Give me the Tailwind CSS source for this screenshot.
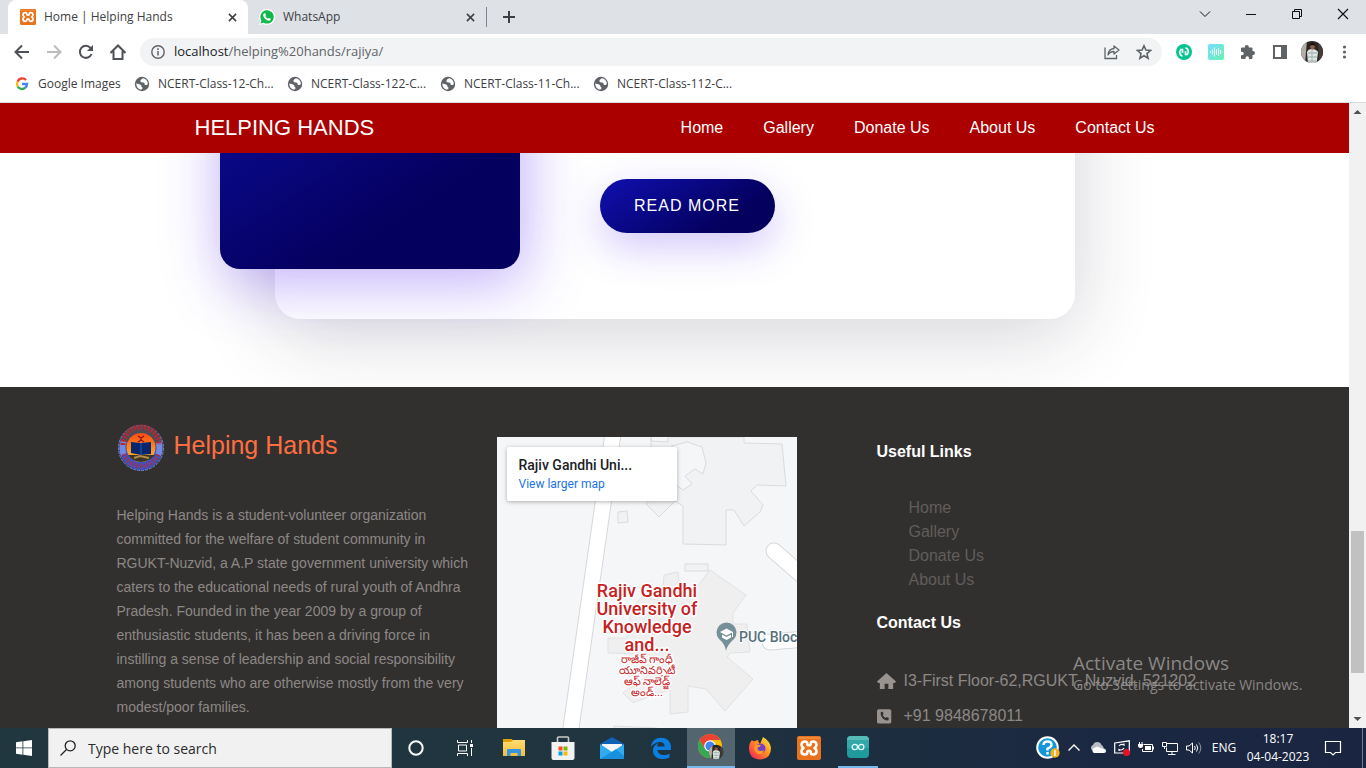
<!DOCTYPE html>
<html lang="en">
<head>
<meta charset="utf-8">
<title>Home | Helping Hands</title>
<script src="https://cdn.jsdelivr.net/npm/@tailwindcss/browser@4"></script>
</head>
<body class="h-screen flex flex-col overflow-hidden bg-white font-['Open_Sans',sans-serif] text-[#3c4043]">

<svg class="absolute size-0" aria-hidden="true">
  <defs>
    <symbol id="xampp" viewBox="0 0 24 24">
      <rect width="24" height="24" rx="2" fill="#e8731c"/>
      <rect x="1" y="1" width="22" height="2" rx="1" fill="#f39a50" opacity=".6"/>
      <path d="M8 5.500Q4.500 5.500 4.500 8.800Q4.500 11 6.500 12Q4.500 13 4.500 15.500Q4.500 18.500 8 18.500Q10.300 18.500 10.300 16.300Q10.300 14.800 12 14.800T13.700 16.300Q13.700 18.500 16 18.500Q19.500 18.500 19.500 15.500Q19.500 13 17.500 12Q19.500 11 19.500 8.800Q19.500 5.500 16 5.500Q13.700 5.500 13.700 7.700Q13.700 9.300 12 9.300T10.300 7.700Q10.300 5.500 8 5.500Z" fill="none" stroke="#fff" stroke-width="2.600" stroke-linejoin="round"/>
    </symbol>
    <symbol id="globe" viewBox="0 0 16 16">
      <circle cx="8" cy="8" r="7.200" fill="#5f6368"/>
      <path d="M9 2.200Q6 3.500 6.500 5.500Q7 6.800 9.500 6.500Q11 7 10.500 8.500Q12 9.500 13.500 8.500L13.800 7Q13 3 9 2.200ZM2.200 7.500Q5 8 6 8.500Q8 9 7.500 11Q9 11 8.500 12.500L7 13.800Q2.500 13 2.200 7.500Z" fill="#fff"/>
    </symbol>
    <symbol id="close" viewBox="0 0 10 10"><path d="M1 1L9 9M9 1L1 9" stroke="currentColor" stroke-width="1.700"/></symbol>
    <clipPath id="round"><circle cx="12" cy="12" r="11"/></clipPath>
    <symbol id="avatar" viewBox="0 0 24 24">
      <g clip-path="url(#round)">
        <rect width="24" height="24" fill="#2c2725"/>
        <path d="M0 0H7L5 24H0Z" fill="#b3aea8"/><path d="M18 0L24 0V24H19Z" fill="#453c35"/>
        <path d="M7 12Q8 9 12 9Q16 9 18 12L17 20L16 24H8Z" fill="#dde8e6"/>
        <path d="M8 13H17M8 17H17M8 21H16" stroke="#7fb0aa" stroke-width="1.200"/>
        <path d="M12 9V23" stroke="#d9a2a2" stroke-width="1"/>
        <ellipse cx="12.500" cy="6.500" rx="2.300" ry="3" fill="#8d6047"/><path d="M10 6Q10 3 12.500 3T15 6Q12 4 10 6Z" fill="#15110f"/>
      </g>
    </symbol>
    <linearGradient id="folder" x1="0" y1="0" x2="0" y2="1"><stop stop-color="#ffdc72"/><stop offset="1" stop-color="#f5bd3a"/></linearGradient>
    <linearGradient id="fox" x1="1" y1="0" x2="0" y2="1"><stop stop-color="#fff04a"/><stop offset=".4" stop-color="#ff9a1f"/><stop offset=".75" stop-color="#ff4a41"/><stop offset="1" stop-color="#e31587"/></linearGradient>
    <linearGradient id="mint" x1="0" y1="0" x2="1" y2="1"><stop stop-color="#77dcff"/><stop offset="1" stop-color="#66f3ae"/></linearGradient>
    <linearGradient id="sunset" x1="0" y1="0" x2="0" y2="1"><stop stop-color="#ff4b16"/><stop offset="1" stop-color="#ffc42c"/></linearGradient>
  </defs>
</svg>

<!-- Tab strip -->
<div class="h-[34px] shrink-0 bg-[#dee1e6] flex items-center text-xs">
  <div class="ml-2 w-60 h-full bg-white rounded-t-lg flex items-center pl-3 pr-2.5">
    <svg class="size-4 shrink-0"><use href="#xampp"/></svg>
    <span class="ml-2 flex-1 whitespace-nowrap">Home | Helping Hands</span>
    <button aria-label="Close tab" class="size-3 grid place-items-center"><svg class="size-[9px]"><use href="#close"/></svg></button>
  </div>
  <div class="w-[239px] h-5 border-r border-[#80868b] flex items-center pl-[11px] pr-2.5">
    <svg class="size-4 shrink-0" viewBox="0 0 16 16"><path d="M0 16L1.200 12A8 8 0 1 1 4.200 14.900Z" fill="#fff"/><path d="M1.500 14.500L2.400 11.500A6.700 6.700 0 1 1 4.700 13.700Z" fill="#12b84b"/><path d="M5.300 4.200L6.300 4.300L7 6L6.300 7Q7.300 9 9.200 9.700L10 8.900L11.800 9.700Q11.800 11.500 9.900 11.700C7 11.500 4.200 8.500 4.200 6Q4.300 4.500 5.300 4.200Z" fill="#fff"/></svg>
    <span class="ml-2 flex-1">WhatsApp</span>
    <button aria-label="Close tab" class="size-3 grid place-items-center"><svg class="size-[9px]"><use href="#close"/></svg></button>
  </div>
  <button aria-label="New tab" class="ml-4"><svg class="size-3" viewBox="0 0 12 12"><path d="M6 0V12M0 6H12" stroke="#3c4043" stroke-width="2"/></svg></button>
  <div class="ml-auto mb-1.5 flex items-center gap-[34px] pr-[17px] text-[#111]">
    <button aria-label="Search tabs"><svg class="size-3" viewBox="0 0 12 12"><path d="M1 3.500L6 8.500L11 3.500" fill="none" stroke="currentColor"/></svg></button>
    <button aria-label="Minimize"><svg class="size-3" viewBox="0 0 12 12"><path d="M1 6.500H11" stroke="currentColor"/></svg></button>
    <button aria-label="Restore"><svg class="size-3" viewBox="0 0 12 12"><path d="M1.500 3.500H8.500V10.500H1.500ZM3.500 3.500V1.500H10.500V8.500H8.500" fill="none" stroke="currentColor"/></svg></button>
    <button aria-label="Close window"><svg class="size-3" viewBox="0 0 12 12"><path d="M1 1L11 11M11 1L1 11" stroke="currentColor" stroke-width="1.200"/></svg></button>
  </div>
</div>

<!-- Address bar -->
<div class="h-9 shrink-0 flex items-center pl-3.5 pr-3.5 text-[#5f6368]">
  <div class="flex items-center gap-4">
    <button aria-label="Back"><svg class="size-4 block" viewBox="0 0 16 16"><path d="M15 8H2M8 1.500L1.500 8L8 14.500" fill="none" stroke="#4d5156" stroke-width="2"/></svg></button>
    <button aria-label="Forward"><svg class="size-4 block" viewBox="0 0 16 16"><path d="M1 8H14M8 1.500L14.500 8L8 14.500" fill="none" stroke="#babcbe" stroke-width="2"/></svg></button>
    <button aria-label="Reload"><svg class="size-4 block" viewBox="0 0 16 16"><path d="M13.500 10A6 6 0 1 1 12.500 4" fill="none" stroke="#4d5156" stroke-width="2"/><path d="M15 1V7H9Z" fill="#4d5156"/></svg></button>
    <button aria-label="Home page"><svg class="size-4 block" viewBox="0 0 16 16"><path d="M.5 9L8 1.500L15.500 9M3.500 7V15H12.500V7" fill="none" stroke="#4d5156" stroke-width="2"/></svg></button>
  </div>
  <div class="ml-3.5 flex-1 h-7 rounded-full bg-[#f1f3f4] flex items-center pl-[11px] pr-2.5">
    <svg class="size-3.5 shrink-0" viewBox="0 0 14 14"><circle cx="7" cy="7" r="6.200" fill="none" stroke="currentColor" stroke-width="1.400"/><path d="M7 6V10.500M7 3.300V5" stroke="currentColor" stroke-width="1.500"/></svg>
    <div class="ml-[9px] flex-1 text-[13px] outline-none" role="textbox" aria-label="Address" contenteditable="true" spellcheck="false"><span class="text-[#202124]">localhost</span>/helping%20hands/rajiya/</div>
    <button aria-label="Share"><svg class="size-4 block" viewBox="0 0 16 16"><path d="M1 3.500V14.500H12.500V11" fill="none" stroke="currentColor" stroke-width="1.300"/><path d="M10 2L15 6L10 10V7.500Q6 7.500 4 11Q4.500 5 10 4.500Z" fill="none" stroke="currentColor" stroke-width="1.300" stroke-linejoin="round"/></svg></button>
    <button aria-label="Bookmark this page" class="ml-4"><svg class="size-4 block" viewBox="0 0 16 16"><path d="M8 1.800L9.900 6.100L14.500 6.500L11 9.600L12.100 14.200L8 11.700L3.900 14.200L5 9.600L1.500 6.500L6.100 6.100Z" fill="none" stroke="currentColor" stroke-width="1.600"/></svg></button>
  </div>
  <div class="ml-3.5 flex items-center">
    <button aria-label="Sync extension"><svg class="size-4 block" viewBox="0 0 16 16"><circle cx="8" cy="8" r="8" fill="#05c48f"/><path d="M9.500 3.800Q12.300 4.500 12.300 8Q12.200 9.500 11 10.500M9.500 7V10.500H12M6.500 12.200Q3.700 11.500 3.700 8Q3.800 6.500 5 5.500M6.500 9V5.500H4" fill="none" stroke="#fff" stroke-width="1.600"/></svg></button>
    <button aria-label="Audio extension" class="ml-4"><svg class="size-4 block" viewBox="0 0 16 16"><rect width="16" height="16" rx="2" fill="url(#mint)"/><path d="M2.500 7V9M4.500 5.500V10.500M6.500 3.500V12.500M8.500 5V11M10.500 4V12M12.500 6V10M14.200 7.500V8.500" stroke="#fff" opacity=".9"/></svg></button>
    <button aria-label="Extensions" class="ml-4"><svg class="size-4 block" viewBox="0 0 16 16"><path d="M1 4.500Q1 3.500 2 3.500H4.800V3A2 2 0 0 1 8.800 3V3.500H11.500Q12.500 3.500 12.500 4.500V7H13A2 2 0 0 1 13 11H12.500V14Q12.500 15 11.500 15H9V14A1.700 1.700 0 0 0 5.500 14V15H2Q1 15 1 14V11.200H2A1.700 1.700 0 0 0 2 7.700H1Z" fill="currentColor"/></svg></button>
    <button aria-label="Side panel" class="ml-4"><svg class="size-4 block" viewBox="0 0 16 16"><path d="M1 1H15V15H1ZM3 3V13H9V3Z" fill="currentColor" fill-rule="evenodd"/></svg></button>
    <button aria-label="Profile" class="ml-3"><svg class="size-6 block"><use href="#avatar"/></svg></button>
    <button aria-label="Browser menu" class="ml-3"><svg class="size-4 block" viewBox="0 0 16 16"><circle cx="8.500" cy="3" r="1.600" fill="currentColor"/><circle cx="8.500" cy="8" r="1.600" fill="currentColor"/><circle cx="8.500" cy="13" r="1.600" fill="currentColor"/></svg></button>
  </div>
</div>

<!-- Bookmarks -->
<div class="h-[33px] shrink-0 border-b border-[#dadce0] flex items-start pt-1.5 pl-3.5 text-xs">
  <a href="#" class="flex items-center w-[120px] whitespace-nowrap"><svg class="size-4 mr-2 shrink-0" viewBox="0 0 16 16" fill="none" stroke-width="2.400"><path d="M12 4A5 5 0 0 0 3.600 5.700" stroke="#ea4335"/><path d="M3.600 5.700A5 5 0 0 0 3.700 10.500" stroke="#fbbc05"/><path d="M3.700 10.500A5 5 0 0 0 11.300 11.700" stroke="#34a853"/><path d="M11.300 11.700A5 5 0 0 0 13 8H8" stroke="#4285f4"/></svg>Google Images</a>
  <a href="#" class="flex items-center w-[153px] whitespace-nowrap"><svg class="size-4 mr-2 shrink-0"><use href="#globe"/></svg>NCERT-Class-12-Ch...</a>
  <a href="#" class="flex items-center w-[153px] whitespace-nowrap"><svg class="size-4 mr-2 shrink-0"><use href="#globe"/></svg>NCERT-Class-122-C...</a>
  <a href="#" class="flex items-center w-[153px] whitespace-nowrap"><svg class="size-4 mr-2 shrink-0"><use href="#globe"/></svg>NCERT-Class-11-Ch...</a>
  <a href="#" class="flex items-center w-[153px] whitespace-nowrap"><svg class="size-4 mr-2 shrink-0"><use href="#globe"/></svg>NCERT-Class-112-C...</a>
</div>

<!-- Page viewport -->
<div class="relative flex-1 min-h-0 flex">
  <div class="flex-1 min-w-0 flex flex-col overflow-hidden font-['Liberation_Sans',Arial,sans-serif] text-base">
    <header class="relative z-10 h-[50px] shrink-0 bg-[#ab0000] text-white">
      <div class="max-w-[960px] h-full mx-auto flex items-center justify-between">
        <a href="#" class="pb-0.5 text-[22px]">HELPING HANDS</a>
        <nav class="flex gap-10">
          <a href="#">Home</a><a href="#">Gallery</a><a href="#">Donate Us</a><a href="#">About Us</a><a href="#">Contact Us</a>
        </nav>
      </div>
    </header>

    <main class="h-[234px] shrink-0 flex justify-center items-end pb-[68px] overflow-hidden">
      <article class="w-[800px] h-[400px] rounded-[25px] bg-white shadow-[0_14px_80px_rgba(34,35,58,0.2)] flex items-center">
        <div class="-ml-[55px] size-[300px] rounded-[20px] bg-[linear-gradient(147deg,#1010b0_0%,#04005e_74%)] shadow-[4px_13px_60px_1px_rgba(80,30,240,0.35)]"></div>
        <div class="ml-20 self-end pb-[86px]">
          <a href="#" class="flex items-center justify-center w-[175px] h-[54px] rounded-full bg-[linear-gradient(147deg,#1010b0_0%,#04005e_74%)] shadow-[0_14px_40px_rgba(80,30,240,0.25)] text-white text-base tracking-[1px]">READ MORE</a>
        </div>
      </article>
    </main>

    <footer class="flex-1 min-h-0 bg-[#32302f] overflow-hidden text-[#8c8885]">
      <div class="max-w-[1140px] mx-auto px-3 grid grid-cols-3 gap-6">
        <section class="pt-[37px]">
          <div class="flex items-center gap-[9px]">
            <svg class="size-12" viewBox="0 0 48 48">
              <circle cx="24" cy="24" r="22" fill="#4d4a56"/>
              <path d="M3 25A21 21 0 0 0 45 25Z" fill="#3954c4"/>
              <circle cx="24" cy="24" r="22.500" fill="none" stroke="#7387d8" stroke-dasharray="3 1"/>
              <circle cx="24" cy="24" r="18.500" fill="none" stroke="#7289e8" stroke-width="6" stroke-dasharray="14 44 14 44" stroke-dashoffset="7"/>
              <path d="M6 21A18 18 0 0 1 42 21" fill="none" stroke="#b52832" stroke-width="5" stroke-dasharray="2 1.500"/>
              <path d="M7 30A18 18 0 0 0 41 30" fill="none" stroke="#94355d" stroke-width="5" stroke-dasharray="2 1.500"/>
              <circle cx="24" cy="23.500" r="14.500" fill="url(#sunset)"/>
              <path d="M11 31H38Q32 38 24 38T11 31Z" fill="#3b3529"/><path d="M17 34L23 32L32 34" stroke="#b28c45" stroke-width="2" fill="none"/>
              <path d="M14 18L23.500 19L34 18V30L24 31L14 29Z" fill="#06276f"/><path d="M24 19V31" stroke="#2b59a5"/>
              <path d="M21 12L24 14L27 12M24 13V16L21 18M24 16L27 18" stroke="#901717" stroke-width="1.500" fill="none"/>
            </svg>
            <h2 class="text-[25px] leading-8 pb-1.5 text-[#ff6e40]">Helping Hands</h2>
          </div>
          <p class="mt-[31px] text-sm leading-6">Helping Hands is a student-volunteer organization committed for the welfare of student community in RGUKT-Nuzvid, a A.P state government university which caters to the educational needs of rural youth of Andhra Pradesh. Founded in the year 2009 by a group of enthusiastic students, it has been a driving force in instilling a sense of leadership and social responsibility among students who are otherwise mostly from the very modest/poor families.</p>
        </section>

        <section class="pt-[50px]">
          <div class="relative w-[300px] h-[300px] bg-[#f5f6f8] overflow-hidden font-['Roboto',sans-serif]" role="group" aria-label="Map">
            <svg class="absolute inset-0" width="300" height="300" viewBox="0 0 300 300">
              <g fill="#f1f2f4" stroke="#d9dbdf">
                <path d="M154 0V4L171 5V0H247V6L285 7L289 49L260 48L254 54L266 68L263 75L247 89L237 73H229V108L186 107V69L178 64L162 80L149 67L154 60Z"/>
                <path d="M175 9L190 5L205 10L209 26L206 37L198 32L188 39L195 47L186 53L175 45Z" fill="#f5f6f8"/>
                <path d="M121 75L130 74L131 85L121 86Z"/>
                <path d="M188 127H211V134H188Z"/>
              </g>
              <g fill="#efefef" stroke="#e1e2e4">
                <path d="M167 138L181 135L184 162L199 151L213 133L249 158L236 176V187H250L253 215L233 216L230 220L256 242L228 274L209 252L191 249V275L173 277V253L156 258L136 266L126 256L150 239L145 217L111 216V201H130L134 172L145 160L165 164Z"/>
              </g>
              <path d="M117 -10L72 305" stroke="#d5d8dc" stroke-width="17" fill="none"/>
              <path d="M117 -10L72 305" stroke="#fff" stroke-width="15" fill="none"/>
              <path d="M277 114L315 147M273 205L310 202" stroke="#d5d8dc" stroke-width="17" stroke-linecap="round"/>
              <path d="M277 114L315 147M273 205L310 202" stroke="#fff" stroke-width="15" stroke-linecap="round"/>
              <path d="M117 300V289L160 291" fill="#efefef" stroke="#dcdee2"/>
              <path d="M229 214Q228 207 222 202A10 10 0 1 1 237 202Q230 208 229 214Z" fill="#768f99"/>
              <path d="M223 195L229.500 191.500L236 195L229.500 198.500ZM225 197.500L229.500 200L234 197.500V200.500L229.500 203L225 200.500ZM235 195H236V200H235Z" fill="#fff"/>
              <g text-anchor="middle" fill="#c5221f" stroke="#fff" stroke-width="3" stroke-linejoin="round" paint-order="stroke">
                <g font-size="18" font-weight="500">
                  <text x="150" y="160">Rajiv Gandhi</text><text x="150" y="178">University of</text><text x="150" y="196">Knowledge</text><text x="150" y="214">and...</text>
                </g>
                <g font-size="11">
                  <text x="150" y="226">రాజీవ్ గాంధీ</text><text x="150" y="237">యూనివర్సిటీ</text><text x="150" y="248">ఆఫ్ నాలెడ్జ్</text><text x="150" y="259">అండ్...</text>
                </g>
              </g>
              <text x="242" y="205" font-size="14" font-weight="500" fill="#54707d" stroke="#fff" stroke-width="2" paint-order="stroke">PUC Block</text>
            </svg>
            <div class="absolute left-2.5 top-2.5 w-[170px] h-[54px] rounded-xs bg-white shadow-[0_1px_4px_rgba(0,0,0,0.3)] px-3 pt-2.5">
              <div class="text-sm leading-4 font-medium text-[#202124]">Rajiv Gandhi Uni...</div>
              <a href="#" class="block mt-[3px] text-xs leading-4 text-[#1a73e8]">View larger map</a>
            </div>
          </div>
        </section>

        <section class="pt-[53px]">
          <h3 class="font-bold leading-6 text-white">Useful Links</h3>
          <ul class="mt-8 pl-8 leading-6 text-[#605d5b]">
            <li><a href="#">Home</a></li><li><a href="#">Gallery</a></li><li><a href="#">Donate Us</a></li><li><a href="#">About Us</a></li>
          </ul>
          <h3 class="mt-[19px] font-bold leading-6 text-white">Contact Us</h3>
          <p class="mt-[34px] flex items-center gap-2 leading-6 whitespace-nowrap"><svg class="w-[19px] h-5" viewBox="0 0 20 20"><path d="M10 1.500L20 10.500L18.800 12H17V18.500H12V13H8V18.500H3V12H1.200L0 10.500Z" fill="#99938f"/></svg>I3-First Floor-62,RGUKT, Nuzvid, 521202</p>
          <p class="mt-[11px] flex items-center gap-2 leading-6 whitespace-nowrap"><svg class="w-[19px] h-5" viewBox="0 0 20 20"><rect x="0" y="3" width="15" height="15" rx="2" fill="#99938f"/><path d="M4 5.800L6 5.500L7 8L6 9Q7 11.200 9 12L10 11L12.500 12L12 14.500C7 15.500 3 10 4 5.800Z" fill="#32302f"/></svg>+91 9848678011</p>
        </section>
      </div>
    </footer>
  </div>

  <!-- Vertical scrollbar -->
  <div class="w-[17px] shrink-0 bg-[#f1f1f1] flex flex-col items-center">
    <svg class="w-[17px] h-[17px]" viewBox="0 0 17 17"><path d="M4.500 11L8.500 7L12.500 11Z" fill="#505050"/></svg>
    <div class="flex-[411]"></div>
    <div class="flex-[142] w-[13px] bg-[#c1c1c1]"></div>
    <div class="flex-[38]"></div>
    <svg class="w-[17px] h-[17px]" viewBox="0 0 17 17"><path d="M4.500 6L8.500 10L12.500 6Z" fill="#505050"/></svg>
  </div>

  <!-- Activation watermark over the page -->
  <div class="absolute right-14 bottom-[33px] z-20 w-[237px] whitespace-nowrap text-[#9b9997]/85 pointer-events-none">
    <div class="text-[19px] leading-6">Activate Windows</div>
    <div class="text-sm leading-5">Go to Settings to activate Windows.</div>
  </div>
</div>

<!-- Taskbar -->
<div class="h-10 shrink-0 bg-[linear-gradient(90deg,#20373f_0%,#20353f_45%,#1b2841_80%,#1a2542_100%)] flex items-stretch text-white">
  <button aria-label="Start" class="w-12 grid place-items-center"><svg class="size-4" viewBox="0 0 16 16" fill="#fff"><path d="M0 2.200L6.500 1.300V7.500H0ZM7.300 1.200L16 0V7.500H7.300ZM0 8.300H6.500V14.700L0 13.800ZM7.300 8.300H16V16L7.300 14.800Z"/></svg></button>
  <label class="w-[344px] bg-[#f1f1f1] border border-[#b9b9b9] flex items-center pl-[11px]">
    <svg class="size-4 shrink-0" viewBox="0 0 16 16"><circle cx="10.200" cy="5.800" r="5" fill="none" stroke="#222" stroke-width="1.300"/><path d="M6.500 9.500L.5 15.500" stroke="#222" stroke-width="1.300"/></svg>
    <input type="text" aria-label="Search" placeholder="Type here to search" class="ml-3 pt-0.5 flex-1 min-w-0 bg-transparent text-sm placeholder-[#2b2b2b] outline-none">
  </label>
  <div class="flex gap-px">
    <button aria-label="Cortana" class="w-12 grid place-items-center"><svg class="size-4" viewBox="0 0 16 16"><circle cx="8" cy="8" r="6.700" fill="none" stroke="#fff" stroke-width="2"/></svg></button>
    <button aria-label="Task view" class="w-12 grid place-items-center"><svg class="size-4" viewBox="0 0 16 16"><path d="M.5 0V2.500H10.500V0M.5 16V13.500H10.500V16M1.500 5H9.500V11H1.500ZM14.500 0V3M14.500 8V16" fill="none" stroke="#fff"/><path d="M13 4H16V7H13Z" fill="#fff"/></svg></button>
    <button aria-label="File Explorer" class="w-12 grid place-items-center"><svg class="w-[22px] h-5" viewBox="0 0 22 20"><path d="M0 1H9L10 3H22V18H0Z" fill="#dfa000"/><path d="M0 4H8L10 2H22V18H0Z" fill="url(#folder)"/><path d="M4 18V12Q4 11 5 11H17Q18 11 18 12V18H14.500V15H7.500V18Z" fill="#3595e0"/></svg></button>
    <button aria-label="Microsoft Store" class="w-12 grid place-items-center"><svg class="size-6" viewBox="0 0 24 24"><path d="M6.500 8V2Q6.500 1 7.500 1H16.500Q17.500 1 17.500 2V8" fill="none" stroke="#c9c9c9" stroke-width="1.600"/><path d="M.5 6H23.500V22Q23.500 24 21.500 24H2.500Q.5 24 .5 22Z" fill="#f2f2f2"/><path d="M7.500 10.500H11.500V14.500H7.500Z" fill="#f25022"/><path d="M12.500 10.500H16.500V14.500H12.500Z" fill="#7fba00"/><path d="M7.500 15.500H11.500V19.500H7.500Z" fill="#00a4ef"/><path d="M12.500 15.500H16.500V19.500H12.500Z" fill="#ffb900"/></svg></button>
    <button aria-label="Mail" class="w-12 grid place-items-center"><svg class="size-6" viewBox="0 0 24 24"><path d="M0 8L12 1L24 8V14H0Z" fill="#0f62b5"/><path d="M2 8H22V16H2Z" fill="#f4f6f8"/><path d="M0 8L12 16L24 8V23H0Z" fill="#31aaf0"/><path d="M0 23L16 13.300L24 20V23Z" fill="#1890dd"/></svg></button>
    <button aria-label="Edge" class="w-12 grid place-items-center"><svg class="size-[22px]" viewBox="0 0 22 22"><path d="M1 9.500C2 3.500 6 .8 11 .8C18 .8 21 5.800 21 10V13H7.500C8 19 15.500 18.800 19.500 16.400V20.400C11 24.500 2.600 20.500 3 13.500C3.200 9.500 5.500 7.500 8.500 6Q7 8 7 9.500H14.700C14.500 3.800 7 3.500 1 9.500Z" fill="#0b7fe0"/></svg></button>
    <button aria-label="Chrome" class="ml-px w-12 bg-[#53666f] border-b-2 border-[#76b9ed] grid place-items-center"><svg class="w-[26px] h-[26px]" viewBox="0 0 26 26"><circle cx="12" cy="12" r="12" fill="#fbbc04"/><path d="M1.600 6A12 12 0 0 1 22.400 6H12L7 15Z" fill="#ea4335"/><path d="M1.600 6A12 12 0 0 0 12 24L17.200 15L7 15Z" fill="#34a853"/><circle cx="12" cy="12" r="5.800" fill="#fff"/><circle cx="12" cy="12" r="4.600" fill="#4285f4"/><use href="#avatar" x="10" y="10" width="16" height="16"/></svg></button>
    <button aria-label="Firefox" class="w-12 grid place-items-center"><svg class="size-6" viewBox="0 0 24 24"><path d="M4 4Q5 6 7 5L10 4Q10 6 12 8L15 1Q22 5 23 12Q23 23 12 23.500Q1 23 1 12Q1 7 4 4Z" fill="url(#fox)"/><circle cx="12.500" cy="12.500" r="5" fill="#7540c7"/><path d="M6 11Q8 8 13 9Q12 11 9.500 11.500Q9 15 13 15Q15 15 16 14Q15 19 10 18Q6 16 6 11Z" fill="#ff9b2b"/></svg></button>
    <button aria-label="XAMPP" class="w-12 grid place-items-center"><svg class="size-6"><use href="#xampp"/></svg></button>
    <button aria-label="Arduino" class="w-12 flex flex-col items-center"><svg class="mt-2 size-[22px]" viewBox="0 0 22 22"><rect width="22" height="22" rx="4" fill="#209a9d"/><rect x="0" y="0" width="22" height="8" rx="4" fill="#56bab9"/><rect y="4" width="22" height="8" fill="#34a8a8"/><circle cx="7.800" cy="11" r="2.700" fill="none" stroke="#e3ffff" stroke-width="1.200"/><circle cx="14.200" cy="11" r="2.700" fill="none" stroke="#e3ffff" stroke-width="1.200"/></svg><span class="mt-auto w-10 h-0.5 bg-[#76b9ed]"></span></button>
  </div>
  <div class="ml-auto flex items-center text-xs">
    <button aria-label="Help"><svg class="size-6 block" viewBox="0 0 24 24"><circle cx="11.500" cy="11.500" r="10.300" fill="#1497d8" stroke="#fff" stroke-width="2"/><path d="M7.500 9Q7.500 5.500 11.500 5.500T15.500 9Q15.500 11 11.500 12.500V14.500M11.500 16V18.500" fill="none" stroke="#fff" stroke-width="2.400"/><circle cx="19" cy="17" r="4.700" fill="#f5b120"/><path d="M19 14V20" stroke="#fff" stroke-width="1.500"/></svg></button>
    <button aria-label="Show hidden icons" class="ml-2"><svg class="w-3 h-4 block" viewBox="0 0 12 16"><path d="M.5 10.500L6 5L11.500 10.500" fill="none" stroke="#fff" stroke-width="1.400"/></svg></button>
    <button aria-label="OneDrive" class="ml-2.5"><svg class="size-4 block" viewBox="0 0 16 16"><path d="M2 10A3 3 0 0 1 3 5A4.500 4.500 0 0 1 11.500 5Q14 6 13.500 9Z" fill="#b8bdc3"/><path d="M4 13A3 3 0 0 1 3 8.500L7 6.500L12 8.500Q16 8 16 11Q16 13 14 13Z" fill="#fff"/></svg></button>
    <button aria-label="Update status" class="ml-2"><svg class="size-4 block" viewBox="0 0 16 16"><path d="M.7 3L15.300 .8V13H.7Z" fill="none" stroke="#fff" stroke-width="1.200"/><path d="M5 6Q7 3.500 10 5V3.500M10 8Q8 11 5 9.500V11" fill="none" stroke="#fff" stroke-width="1.200"/><circle cx="12.500" cy="12.500" r="3.500" fill="#e81123"/></svg></button>
    <button aria-label="Battery" class="ml-2"><svg class="size-4 block" viewBox="0 0 16 16"><path d="M5.500 4.500H14.500V11.500H4.500V9" fill="none" stroke="#fff"/><path d="M7 6H13V10H7ZM15 6.500H16V9.500H15ZM0 4H5V6Q5 8 2.500 8T0 6ZM1 2H2V4H1ZM3.500 2H4.500V4H3.500Z" fill="#fff"/></svg></button>
    <button aria-label="Network" class="ml-2"><svg class="size-4 block" viewBox="0 0 16 16"><path d="M5 3.500H15.500V11.500H4.500V7.500M10 11.500V14.500M6 14.500H13.500M.5 2.500H4.500V6.500H.5ZM2.500 6.500V9" fill="none" stroke="#fff"/></svg></button>
    <button aria-label="Volume" class="ml-2"><svg class="size-4 block" viewBox="0 0 16 16"><path d="M.5 6H3L6.500 3V13L3 10H.5ZM8.500 6Q10 8 8.500 10M10.500 4.500Q13 8 10.500 11.500" fill="none" stroke="#fff"/><path d="M12.700 2.500Q17 8 12.700 13.500" fill="none" stroke="#fff" opacity=".5"/></svg></button>
    <span class="w-10 ml-0.5 text-center">ENG</span>
    <time class="w-[68px] text-center leading-[18px] whitespace-nowrap">18:17<br>04-04-2023</time>
    <button aria-label="Notifications" class="ml-3"><svg class="size-[18px] block" viewBox="0 0 18 18"><path d="M1.500 2.500H16.500V13.500H11.500L9 16L6.500 13.500H1.500Z" fill="none" stroke="#fff" stroke-width="1.200"/></svg></button>
    <span class="ml-5 mr-[3px] w-px h-10 bg-[#707b8c]"></span>
  </div>
</div>
</body>
</html>
